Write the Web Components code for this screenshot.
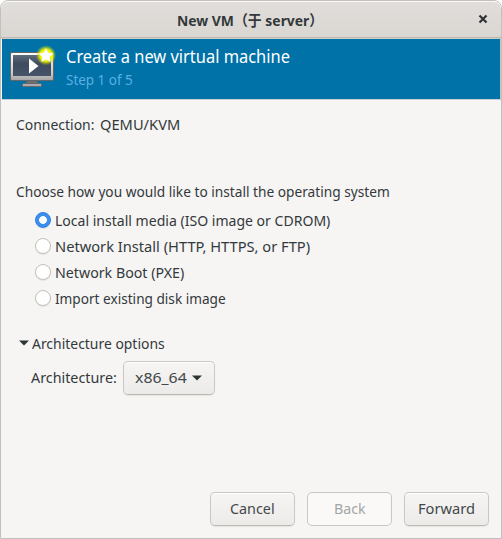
<!DOCTYPE html>
<html lang="en">
<head>
<meta charset="utf-8">
<title>New VM</title>
<style>
html,body{margin:0;background:#fff;width:502px;height:539px;overflow:hidden}
body{font:14.67px/20px "Noto Sans","Noto Sans CJK SC",sans-serif;color:#33393b}
</style>
</head>
<body>
<vm-window>
  <title-bar slot="title"><text-run w="146">New VM（于 server）</text-run></title-bar>
  <wizard-banner slot="banner">
    <text-run slot="heading" w="224">Create a new virtual machine</text-run>
    <text-run slot="step" w="67">Step 1 of 5</text-run>
  </wizard-banner>
  <install-form slot="content">
    <text-run slot="key" w="78">Connection:</text-run>
    <text-run slot="value" w="80">QEMU/KVM</text-run>
    <text-run slot="prompt" w="374">Choose how you would like to install the operating system</text-run>
    <radio-option slot="choices" checked><text-run w="275">Local install media (ISO image or CDROM)</text-run></radio-option>
    <radio-option slot="choices"><text-run w="255">Network Install (HTTP, HTTPS, or FTP)</text-run></radio-option>
    <radio-option slot="choices"><text-run w="129">Network Boot (PXE)</text-run></radio-option>
    <radio-option slot="choices"><text-run w="171">Import existing disk image</text-run></radio-option>
    <text-run slot="expander" w="133">Architecture options</text-run>
    <text-run slot="label" w="86">Architecture:</text-run>
    <push-button slot="combo" menu><text-run w="52">x86_64</text-run></push-button>
  </install-form>
  <push-button slot="actions"><text-run w="45">Cancel</text-run></push-button>
  <push-button slot="actions" disabled><text-run w="32">Back</text-run></push-button>
  <push-button slot="actions"><text-run w="57">Forward</text-run></push-button>
</vm-window>
<script>
function define(name, html, ready) {
  const template = document.createElement('template');
  template.innerHTML = html;
  customElements.define(name, class extends HTMLElement {
    constructor() {
      super();
      this.attachShadow({mode: 'open'}).append(template.content.cloneNode(true));
    }
    connectedCallback() { if (ready) ready(this); }
  });
}

define('vm-window', `<style>
:host{display:flex;flex-direction:column;box-sizing:border-box;width:502px;height:539px;border:1px solid #c2c0be;border-radius:8px 8px 0 0;background:#f6f5f4;overflow:hidden}
.grow{flex:1}
footer{display:flex;justify-content:flex-end;gap:12px;padding:0 12px 12px}
</style><slot name="title"></slot><slot name="banner"></slot><div class="grow"><slot name="content"></slot></div><footer><slot name="actions"></slot></footer>`);

define('title-bar', `<style>
:host{display:grid;grid-template-columns:1fr 146px 1fr;align-items:center;box-sizing:border-box;height:38px;padding:1px 13px 0 11px;background:linear-gradient(#e1dedb,#dad6d2);border-bottom:1px solid #d0cbc6;box-shadow:inset 0 1px #faf9f8,inset 0 -1px #bfb8b1;border-radius:7px 7px 0 0;font-weight:700}
svg{justify-self:end;margin-top:-2px}
</style><i></i><slot></slot><svg width="10" height="10" viewBox="0 0 10 10"><path d="M1.5 1.500L8.500 8.500M8.500 1.500L1.500 8.500" stroke="#2e3436" stroke-width="2.200"/></svg>`);

define('wizard-banner', `<style>
:host{display:flex;box-sizing:border-box;height:61px;margin:0 0 0 1px;border-right:1px solid #c8c5c2;border-bottom:1px solid #c5ced3;background:#0072a8;color:#fff;padding:6px 0 0 7px}
.copy{padding:0 0 0 8px}
.h{font-size:17.6px;line-height:22px;height:23px}
.s{color:#59b0e2;line-height:20px;margin-top:1px}
</style>
<svg width="49" height="46" viewBox="0 0 49 46">
<defs><linearGradient id="rim" x2="0" y2="1"><stop stop-color="#fff"/><stop offset=".75" stop-color="#c8c8c8"/><stop offset="1" stop-color="#a4a4a4"/></linearGradient>
<linearGradient id="screen" x2="0" y2="1"><stop stop-color="#5e6b7c"/><stop offset=".4" stop-color="#3f4b5f"/><stop offset="1" stop-color="#465267"/></linearGradient>
<radialGradient id="glow"><stop stop-color="#ffff20"/><stop offset=".6" stop-color="#f4f600" stop-opacity=".95"/><stop offset="1" stop-color="#b8d000" stop-opacity="0"/></radialGradient></defs>
<path d="M17.500 35h11v4h-11z" fill="#6a6c6e"/><rect x="13.500" y="38.500" width="19" height="3" rx="1" fill="#aaa" stroke="#686868"/>
<rect x="1.500" y="7.500" width="43" height="28" rx="1.500" fill="url(#rim)" stroke="#666"/>
<rect x="4" y="10" width="38" height="21" fill="url(#screen)"/>
<path d="M20 13.500v15l9.500-7.500z" fill="#fff"/>
<circle cx="37" cy="10.300" r="10.200" fill="url(#glow)"/>
<path d="M37 3.300l2.300 4.500 5 .7-3.600 3.500.9 5-4.600-2.400-4.600 2.400.9-5-3.600-3.500 5-.7z" fill="#fff"/>
</svg>
<div class="copy"><div class="h"><slot name="heading"></slot></div><div class="s"><slot name="step"></slot></div></div>`);

define('install-form', `<style>
:host{display:block;padding:14px 0 0 15px}
.row{display:flex;align-items:center}
.connection{gap:6px;height:20px}
.prompt{margin-top:47px;height:20px}
.choices{display:flex;flex-direction:column;gap:6px;margin:9px 0 0 19px}
.expander{gap:3px;margin:25px 0 0 3px;height:20px}
.arch{gap:6px;margin:8px 0 0 15px}
.arch slot[name=label]::slotted(*){margin-top:-2px}
</style>
<div class="row connection"><slot name="key"></slot><slot name="value"></slot></div>
<div class="prompt"><slot name="prompt"></slot></div>
<div class="choices"><slot name="choices"></slot></div>
<div class="row expander"><svg width="10" height="6"><path d="M0 .5h10L5 5.500z" fill="#2e3436"/></svg><slot name="expander"></slot></div>
<div class="row arch"><slot name="label"></slot><slot name="combo"></slot></div>`);

define('radio-option', `<style>
:host{display:flex;align-items:center;gap:4px;height:20px}
i{box-sizing:border-box;width:16px;height:16px;border-radius:50%;border:1px solid #c4bfba;background:#fff;box-shadow:0 1px 1px #0001}
:host([checked]) i{border:1px solid #2d7fe0;background:radial-gradient(circle,#fff 0 3.5px,#3d8fee 4.3px)}
</style><i></i><slot></slot>`);

define('push-button', `<style>
:host{display:flex;align-items:center;justify-content:center;box-sizing:border-box;width:85px;height:34px;padding-bottom:2px;border:1px solid #cdc7c2;border-bottom-color:#bfb8b1;border-radius:5px;background:linear-gradient(#f6f5f4,#edebe9);box-shadow:inset 0 1px #fff,0 1px 1px #0001;color:#42484a}
:host([menu]){width:92px;gap:5px;justify-content:flex-start;padding-left:11px}
:host([disabled]){background:#faf9f8;border-color:#cdc7c2;color:#a3a6a5;box-shadow:none}
svg{display:none}:host([menu]) svg{display:block;margin-top:2px}
</style><slot></slot><svg width="10" height="6"><path d="M0 .5h10L5 5.500z" fill="#2e3436"/></svg>`);

// A line of text condensed or expanded horizontally to the width in its "w" attribute.
define('text-run', `<style>
:host{display:block;white-space:nowrap}
span{display:inline-block;transform-origin:0 50%}
</style><span><slot></slot></span>`, el => {
  const span = el.shadowRoot.querySelector('span');
  const w = Number(el.getAttribute('w'));
  el.style.width = w + 'px';
  span.style.transform = 'scaleX(' + w / span.offsetWidth + ')';
});
</script>
</body>
</html>
